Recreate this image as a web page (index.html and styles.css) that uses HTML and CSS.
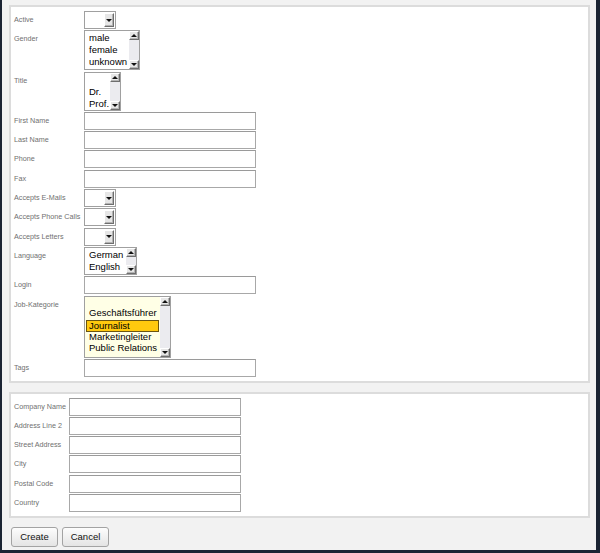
FILE: index.html
```html
<!DOCTYPE html>
<html lang="en">

<head>
    <meta charset="UTF-8">
    <title>Contact</title>
    <link rel="stylesheet" href="styles.css">
</head>

<body>

    <div class="window">
        <div class="panel">
            <div class="form-grid person">
                <label>Active</label>
                <div class="dropdown"><span class="drop-btn"><span class="arrow-down"></span></span></div>

                <label>Gender</label>
                <div class="listbox gender">
                    <div class="items">
                        <div class="item">male</div>
                        <div class="item">female</div>
                        <div class="item">unknown</div>
                    </div>
                    <div class="scroll"><span class="sbtn"><span class="arrow-up"></span></span><span class="track"></span><span class="sbtn"><span class="arrow-down"></span></span></div>
                </div>

                <label>Title</label>
                <div class="listbox title">
                    <div class="items">
                        <div class="item">&nbsp;</div>
                        <div class="item">Dr.</div>
                        <div class="item">Prof.</div>
                    </div>
                    <div class="scroll"><span class="sbtn"><span class="arrow-up"></span></span><span class="track"></span><span class="sbtn"><span class="arrow-down"></span></span></div>
                </div>

                <label>First Name</label>
                <input type="text" class="text">

                <label>Last Name</label>
                <input type="text" class="text">

                <label>Phone</label>
                <input type="text" class="text">

                <label>Fax</label>
                <input type="text" class="text">

                <label>Accepts E-Mails</label>
                <div class="dropdown"><span class="drop-btn"><span class="arrow-down"></span></span></div>

                <label>Accepts Phone Calls</label>
                <div class="dropdown"><span class="drop-btn"><span class="arrow-down"></span></span></div>

                <label>Accepts Letters</label>
                <div class="dropdown"><span class="drop-btn"><span class="arrow-down"></span></span></div>

                <label>Language</label>
                <div class="listbox language">
                    <div class="items">
                        <div class="item">German</div>
                        <div class="item">English</div>
                    </div>
                    <div class="scroll"><span class="sbtn"><span class="arrow-up"></span></span><span class="track"></span><span class="sbtn"><span class="arrow-down"></span></span></div>
                </div>

                <label>Login</label>
                <input type="text" class="text">

                <label>Job-Kategorie</label>
                <div class="listbox job">
                    <div class="items">
                        <div class="item">&nbsp;</div>
                        <div class="item">Geschäftsführer</div>
                        <div class="item selected">Journalist</div>
                        <div class="item">Marketingleiter</div>
                        <div class="item">Public Relations</div>
                    </div>
                    <div class="scroll"><span class="sbtn"><span class="arrow-up"></span></span><span class="track"></span><span class="sbtn"><span class="arrow-down"></span></span></div>
                </div>

                <label>Tags</label>
                <input type="text" class="text">
            </div>
        </div>

        <div class="panel address">
            <div class="form-grid company">
                <label>Company Name</label>
                <input type="text" class="text">

                <label>Address Line 2</label>
                <input type="text" class="text">

                <label>Street Address</label>
                <input type="text" class="text">

                <label>City</label>
                <input type="text" class="text">

                <label>Postal Code</label>
                <input type="text" class="text">

                <label>Country</label>
                <input type="text" class="text">
            </div>
        </div>

        <div class="actions">
            <button>Create</button>
            <button>Cancel</button>
        </div>
    </div>

</body>

</html>
```

FILE: styles.css
```css
body {
    margin: 0;
    font-family: "Liberation Sans", Arial, sans-serif;
}

.window {
    width: 600px;
    height: 553px;
    box-sizing: border-box;
    background: #f2f2f2;
    border-left: 2px solid #1b2433;
    border-right: 4px solid #1b2433;
    border-bottom: 3px solid #1b2433;
    padding: 5px 6px 0 7px;
}

.panel {
    background: #fff;
    border: 2px solid #dcdcdc;
    padding: 4px 3px 4px 3px;
}

.panel.address {
    margin-top: 9px;
}

.form-grid {
    display: grid;
    grid-template-columns: 70px 1fr;
    row-gap: 1.3px;
    align-items: start;
}

.form-grid.company {
    grid-template-columns: 55px 1fr;
    row-gap: 1.2px;
}

label {
    font-size: 7.2px;
    line-height: 8px;
    padding-top: 5px;
    color: #707070;
    white-space: nowrap;
}

.text {
    width: 172px;
    height: 18px;
    box-sizing: border-box;
    margin: 0;
    padding: 0 3px;
    border: 1px solid #a8a8a8;
    border-top-color: #9a9a9a;
    background: #fff;
    font-family: inherit;
    font-size: 10px;
}

/* dropdowns */
.dropdown {
    width: 32px;
    height: 18px;
    box-sizing: border-box;
    border: 1px solid #a0a0a0;
    background: #fff;
    display: flex;
    justify-content: flex-end;
    align-items: center;
    padding-right: 1px;
}

.drop-btn,
.sbtn {
    display: flex;
    align-items: center;
    justify-content: center;
    box-sizing: border-box;
    background: #e6e6e6;
    border: 1px solid;
    border-color: #fff #6e6e6e #6e6e6e #fff;
    box-shadow: inset -1px -1px 0 #b4b4b4;
}

.drop-btn {
    width: 10px;
    height: 14px;
}

.arrow-down,
.arrow-up {
    width: 0;
    height: 0;
    border-left: 3px solid transparent;
    border-right: 3px solid transparent;
}

.arrow-down {
    border-top: 3px solid #111;
}

.arrow-up {
    border-bottom: 3px solid #111;
}

/* list boxes */
.listbox {
    box-sizing: border-box;
    border: 1px solid #a0a0a0;
    background: #fff;
    display: flex;
    font-size: 9.5px;
    color: #000;
}

.listbox.gender {
    width: 56px;
    height: 40px;
}

.listbox.title {
    width: 37px;
    height: 39px;
}

.listbox.language {
    width: 53px;
    height: 28px;
}

.listbox.job {
    width: 87px;
    height: 62px;
    background: #ffffe6;
}

.items {
    flex: 1;
    overflow: hidden;
    padding-top: 1px;
}

.listbox.job .items {
    padding-top: 0;
}

.item {
    height: 12px;
    line-height: 11px;
    padding-left: 4px;
    white-space: nowrap;
}

.listbox.job .item {
    height: 11.7px;
    line-height: 10.5px;
}

.item.selected {
    box-sizing: border-box;
    margin: 0 1px;
    padding-left: 2px;
    background: #ffc90e;
    border: 1px solid #6b5510;
    line-height: 9.5px;
}

.scroll {
    width: 10px;
    display: flex;
    flex-direction: column;
    background: #ebebef;
}

.sbtn {
    width: 10px;
    height: 9px;
}

.track {
    flex: 1;
}

/* buttons */
.actions {
    display: flex;
    gap: 4px;
    margin: 9px 0 0 2px;
}

button {
    height: 20px;
    padding: 0 6px;
    border: 1px solid #a3a3a3;
    border-radius: 3px;
    background: linear-gradient(#fdfdfd, #e4e4e4);
    font-family: "Liberation Sans", Arial, sans-serif;
    font-size: 9.5px;
    color: #111;
}

button:first-child {
    width: 47px;
}

button:last-child {
    width: 47px;
}
```
